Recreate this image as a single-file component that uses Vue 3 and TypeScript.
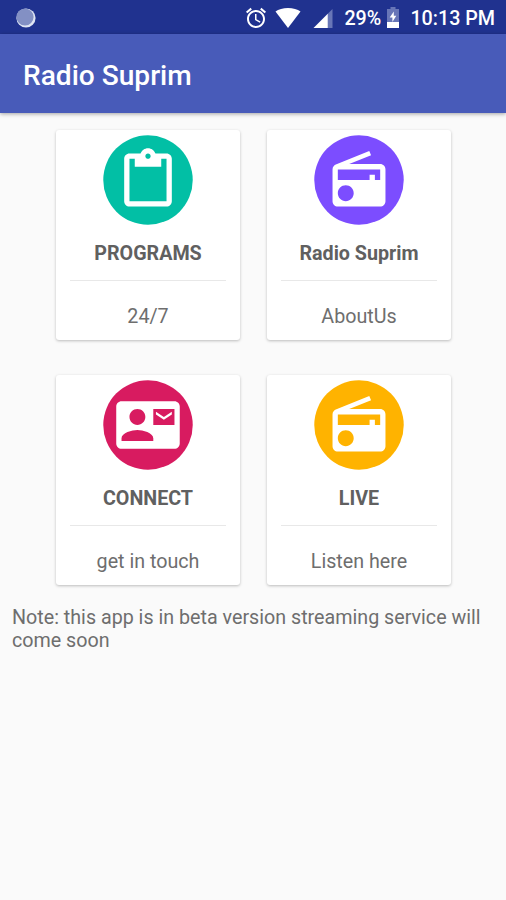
<script setup lang="ts">
interface Tile {
  title: string
  subtitle: string
  color: string
  icon: string
}

const radio =
  'M3.24 6.15C2.51 6.43 2 7.17 2 8v12c0 1.1.89 2 2 2h16c1.11 0 2-.9 2-2V8c0-1.11-.89-2-2-2H8.3l8.26-3.34L15.88 1 3.24 6.15zM7 20c-1.66 0-3-1.34-3-3s1.34-3 3-3 3 1.34 3 3-1.34 3-3 3zm13-8h-2v-2h-2v2H4V8h16v4z'
const clipboard =
  'M19 2h-4.18C14.4.84 13.3 0 12 0S9.6.84 9.18 2H5c-1.1 0-2 .9-2 2v16c0 1.1.9 2 2 2h14c1.1 0 2-.9 2-2V4c0-1.1-.9-2-2-2zm-7 0c.55 0 1 .45 1 1s-.45 1-1 1-1-.45-1-1 .45-1 1-1zm7 18H5V4h2v3h10V4h2v16z'
const contactMail =
  'M21 8V7l-3 2-3-2v1l3 2 3-2zm1-5H2C.9 3 0 3.9 0 5v14c0 1.1.9 2 2 2h20c1.1 0 1.99-.9 1.99-2L24 5c0-1.1-.9-2-2-2zM8 6c1.66 0 3 1.34 3 3s-1.34 3-3 3-3-1.34-3-3 1.34-3 3-3zm6 12H2v-1c0-2 4-3.1 6-3.1s6 1.1 6 3.1v1zm8-6h-8V6h8v6z'

const tiles: Tile[] = [
  { title: 'PROGRAMS', subtitle: '24/7', color: '#02bfa5', icon: clipboard },
  { title: 'Radio Suprim', subtitle: 'AboutUs', color: '#7c4dff', icon: radio },
  { title: 'CONNECT', subtitle: 'get in touch', color: '#d81b60', icon: contactMail },
  { title: 'LIVE', subtitle: 'Listen here', color: '#ffb300', icon: radio },
]
</script>

<template>
  <div class="screen">
    <header class="status">
      <svg class="sync" viewBox="0 0 20 20">
        <circle cx="10" cy="10" r="9.6" fill="#dfe5f3" />
        <circle cx="9" cy="9" r="8.6" fill="#8390c4" />
      </svg>
      <svg class="alarm" viewBox="2 2 20 20">
        <path
          fill="#fff"
          d="M22 5.72l-4.6-3.86-1.29 1.53 4.6 3.86L22 5.72zM7.88 3.39L6.6 1.86 2 5.71l1.29 1.53 4.59-3.85zM12.5 8H11v6l4.75 2.85.75-1.23-4-2.37V8zM12 4c-4.97 0-9 4.03-9 9s4.02 9 9 9c4.97 0 9-4.03 9-9s-4.03-9-9-9zm0 16c-3.87 0-7-3.13-7-7s3.13-7 7-7 7 3.13 7 7-3.13 7-7 7z"
        />
      </svg>
      <svg class="wifi" viewBox="0 0 26 20">
        <path fill="#fff" d="M13 20 0.500 3.600C3.500 1.200 8 0 13 0s9.500 1.200 12.500 3.600z" />
      </svg>
      <svg class="signal" viewBox="0 0 20 20">
        <path fill="#6876b7" d="M14.500 5.500 20 0v20h-5.500z" />
        <path fill="#fff" d="M0 20 15 5v15z" />
      </svg>
      <span class="percent">29%</span>
      <svg class="battery" viewBox="0 0 12 21">
        <path fill="#6876b7" d="M3.500 0h5v2H12v13H0V2h3.500z" />
        <path fill="#fff" d="M0 15h12v6H0zM6.800 4.500v4.200h2.500L5.400 15v-4.600H2.700z" />
      </svg>
      <span class="clock">10:13 PM</span>
    </header>
    <div class="toolbar"><h1>Radio Suprim</h1></div>
    <main>
      <div class="grid">
        <section v-for="tile in tiles" :key="tile.title" class="card">
          <svg class="badge" viewBox="-5 -5 34 34">
            <circle cx="12" cy="12" r="16.900" :fill="tile.color" />
            <path fill="#fff" :d="tile.icon" />
          </svg>
          <h2>{{ tile.title }}</h2>
          <hr />
          <p>{{ tile.subtitle }}</p>
        </section>
      </div>
      <p class="note">Note: this app is in beta version streaming service will come soon</p>
    </main>
  </div>
</template>

<style>
body {
  margin: 0;
  background: #fafafa;
}
</style>

<style scoped>
.screen {
  width: 506px;
  height: 900px;
  overflow: hidden;
  background: #fafafa;
  color: #6e6e6e;
  font-family: Roboto, sans-serif;
  font-size: 19.7px;
  line-height: 23px;
}
.status {
  box-sizing: border-box;
  height: 34px;
  padding: 2px 11px 0 16px;
  display: flex;
  align-items: center;
  background: #20328f;
  color: #fff;
  font-weight: 500;
}
.status svg {
  flex: none;
}
.sync {
  width: 20px;
  height: 20px;
  margin-right: auto;
}
.alarm {
  width: 20px;
  height: 20px;
  overflow: visible;
}
.wifi {
  width: 26px;
  height: 20px;
  margin-left: 9px;
}
.signal {
  width: 20px;
  height: 19px;
  margin-left: 12px;
}
.percent {
  width: 38px;
  margin-left: 11px;
}
.battery {
  width: 12px;
  height: 21px;
  margin: 0 11px 2px 5px;
}
.toolbar {
  position: relative;
  height: 79px;
  display: flex;
  align-items: center;
  padding-left: 23px;
  background: #485bb9;
  box-shadow: 0 1px 4px rgba(0, 0, 0, 0.35);
}
h1 {
  margin: 4px 0 0;
  color: #fff;
  font-size: 28.1px;
  line-height: 33px;
  font-weight: 500;
}
.grid {
  display: grid;
  grid-template-columns: 184px 184px;
  gap: 35px 27px;
  padding: 17px 0 0 56px;
}
.card {
  box-sizing: border-box;
  height: 210px;
  padding: 4.600px 14px 0;
  display: flex;
  flex-direction: column;
  align-items: center;
  border-radius: 3px;
  background: #fff;
  box-shadow: 0 1px 3px rgba(0, 0, 0, 0.25);
}
.badge {
  width: 90px;
  height: 90px;
}
h2 {
  margin: 17.400px 0 15px;
  color: #606060;
  font-size: inherit;
  line-height: 23px;
  font-weight: 700;
  white-space: nowrap;
}
hr {
  align-self: stretch;
  height: 1px;
  margin: 0;
  border: 0;
  background: #e8e8e8;
}
.card p {
  margin: 24px 0 0;
}
.note {
  margin: 21px 12px 0;
}
</style>
